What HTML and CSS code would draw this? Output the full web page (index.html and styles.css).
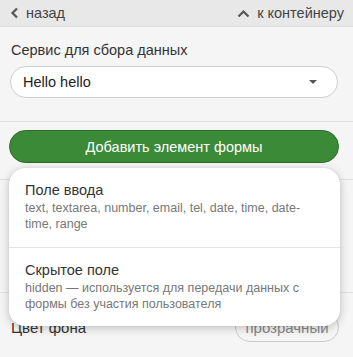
FILE: index.html
```html
<!DOCTYPE html>
<html lang="ru">
<head>
    <meta charset="UTF-8">
    <title>Элементы формы</title>
    <link rel="stylesheet" href="styles.css">
</head>
<body>
<div class="panel">
    <div class="panel-nav">
        <span class="nav-link">
            <svg class="nav-icon" width="9" height="12" viewBox="0 0 9 12"><path d="M7 1.5 L2.5 6 L7 10.5" fill="none" stroke="#555" stroke-width="2.2"/></svg>
            назад
        </span>
        <span class="nav-link">
            <svg class="nav-icon" width="13" height="9" viewBox="0 0 13 9"><path d="M1.5 7.5 L6.5 2.5 L11.5 7.5" fill="none" stroke="#555" stroke-width="2.2"/></svg>
            к контейнеру
        </span>
    </div>

    <div class="section">
        <div class="field-label">Сервис для сбора данных</div>
        <div class="select">
            <span>Hello hello</span>
            <span class="select-arrow"></span>
        </div>
    </div>

    <div class="section add-section">
        <button class="add-button">Добавить элемент формы</button>

        <div class="add-menu">
            <div class="menu-item">
                <div class="menu-title">Поле ввода</div>
                <div class="menu-desc">text, textarea, number, email, tel, date, time, date-time, range</div>
            </div>
            <div class="menu-item">
                <div class="menu-title">Скрытое поле</div>
                <div class="menu-desc">hidden — используется для передачи данных с формы без участия пользователя</div>
            </div>
        </div>
    </div>

    <div class="section hidden-row"></div>

    <div class="prop-row">
        <span class="prop-name">Цвет фона</span>
        <span class="prop-pill">прозрачный</span>
    </div>
</div>
</body>
</html>
```

FILE: styles.css
```css
* {
    margin: 0;
    padding: 0;
    box-sizing: border-box;
}

body {
    font-family: "Liberation Sans", Arial, sans-serif;
    background: #f5f5f5;
    color: #333;
    overflow: hidden;
}

.panel {
    width: 353px;
    height: 357px;
}

.panel-nav {
    height: 27px;
    background: #e8e8e8;
    border-bottom: 1px solid #dcdcdc;
    display: flex;
    justify-content: space-between;
    align-items: center;
    padding: 0 9px 0 10px;
    font-size: 14.5px;
    color: #444;
}

.nav-link {
    display: flex;
    align-items: center;
    gap: 7px;
}

.section {
    padding: 15px 15px 23px 10px;
    border-bottom: 1px solid #e0e0e0;
}

.field-label {
    font-size: 14.5px;
    line-height: 17px;
    color: #333;
    margin: 0 0 7px 1px;
}

.select {
    height: 32px;
    background: #fff;
    border: 1px solid #cfcfcf;
    border-radius: 16px;
    display: flex;
    align-items: center;
    justify-content: space-between;
    padding: 0 20px 0 12px;
    font-size: 14.5px;
    color: #222;
}

.select-arrow {
    width: 0;
    height: 0;
    border-left: 4px solid transparent;
    border-right: 4px solid transparent;
    border-top: 4px solid #555;
}

.add-section {
    position: relative;
    padding: 8px 14px 16px 9px;
}

.add-button {
    display: block;
    width: 100%;
    height: 33px;
    background: #3b8a37;
    border: 1px solid #2c6a29;
    border-radius: 17px;
    color: #fff;
    font-family: inherit;
    font-size: 14.5px;
}

.add-menu {
    position: absolute;
    top: 46px;
    left: 9px;
    width: 331px;
    background: #fff;
    border-radius: 16px;
    box-shadow: 0 2px 10px rgba(0, 0, 0, 0.22), 0 0 1px rgba(0, 0, 0, 0.2);
    z-index: 2;
}

.menu-item {
    padding: 14px 14px 15px 16px;
}

.menu-item + .menu-item {
    border-top: 1px solid #e4e4e4;
    padding-top: 14px;
    padding-bottom: 14px;
}

.menu-title {
    font-size: 14.5px;
    line-height: 17px;
    color: #333;
    margin-bottom: 2px;
}

.menu-desc {
    font-size: 12.5px;
    line-height: 15.5px;
    color: #777;
}

.hidden-row {
    height: 113px;
    padding: 0;
}

.prop-row {
    display: flex;
    justify-content: space-between;
    align-items: center;
    padding: 19px 14px 0 11px;
}

.prop-name {
    font-size: 15px;
    color: #333;
}

.prop-pill {
    height: 30px;
    width: 104px;
    display: flex;
    align-items: center;
    justify-content: center;
    border: 1px solid #ccc;
    border-radius: 15px;
    font-size: 15px;
    color: #888;
}
```
